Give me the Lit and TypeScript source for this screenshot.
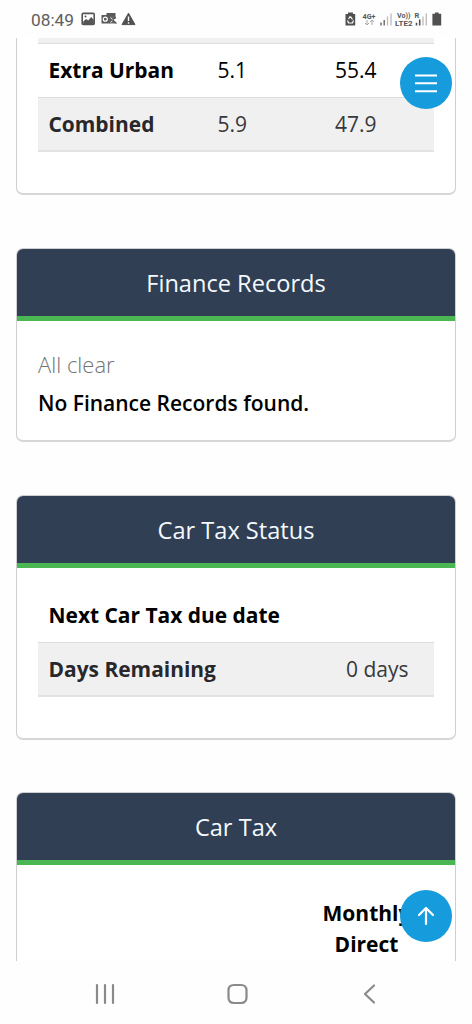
import { LitElement, html, css, svg, nothing } from "lit";
import { customElement, property } from "lit/decorators.js";

@customElement("report-card")
class ReportCard extends LitElement {
  @property() heading = "";
  static styles = css`
    :host { display: block; flex: none; box-sizing: border-box; border: 1px solid #cfcfd2; border-bottom: 2px solid #d6d6d8; border-radius: 7px; overflow: hidden; background: #fff; }
    .heading { box-sizing: border-box; height: 72px; display: flex; align-items: center; justify-content: center; background: #303f54; border-bottom: 5px solid #4ab752; color: #f4f9ff; font-size: 23.600px; line-height: 32px; padding-top: 1px; }
    .body { padding: 0 21px; }
  `;
  render() {
    return html`${this.heading ? html`<div class="heading">${this.heading}</div>` : nothing}
      <div class="body"><slot></slot></div>`;
  }
}

@customElement("status-bar")
class StatusBar extends LitElement {
  static styles = css`
    :host { display: flex; flex: none; height: 38px; box-sizing: border-box; padding: 0 30px 0 31px; align-items: center; justify-content: space-between; color: #555; background: #fefefe; }
    .left { display: flex; align-items: center; gap: 7px; }
    .time { font: 400 17.300px/38px Roboto, sans-serif; color: #606060; padding-top: 3px; height: 38px; box-sizing: border-box; line-height: 35px; }
    svg { display: block; }
    text { font-family: Roboto, sans-serif; font-weight: 700; fill: #585858; }
  `;
  render() {
    return html`
      <div class="left">
        <span class="time">08:49</span>
        <svg width="56" height="16" viewBox="0 0 56 16">
          <rect x="1.200" y="2.400" width="12" height="11" rx="1" fill="none" stroke="#555" stroke-width="1.600"/>
          <path d="M2.200 10.500l3-2.500 2 1.500 3-3.500 2.600 3v4H2.200z" fill="#555"/><circle cx="4.500" cy="5.400" r="1" fill="#555"/>
          <path d="M25.500 2h9v4h-9zM20.500 4h8.500v8.500h-8.500z" fill="#5a5a5a"/>
          <path d="M28.500 5.500h6v2l-2.500 1.500 2.500 2v1.500h-6z" fill="#666"/>
          <circle cx="24.300" cy="8.200" r="2" fill="none" stroke="#fff" stroke-width="1.200"/>
          <path d="M29.500 6.500l2.700 2.500-2.700 2.500" fill="none" stroke="#ddd" stroke-width="1"/>
          <path d="M31.500 8.500l3.500-2M31.500 9l4 3.500" stroke="#555" stroke-width="1.300"/>
          <path d="M47.500 2.200L54 13.600H41z" fill="#505050" stroke="#505050" stroke-width="1" stroke-linejoin="round"/>
          <path d="M47.500 5.500v4.500M47.500 11.300v1.500" stroke="#fff" stroke-width="1.400"/>
        </svg>
      </div>
      <svg width="98" height="20" viewBox="0 0 98 20">
        <path d="M4 3.500h5V5h2.200v11.500H1.500V5H4z" fill="#505050"/>
        <path d="M6.500 7.500l2 3M9.500 11.500l-1 2.500H4.500l-1-2.500M4.500 10l1.700-2.700" fill="none" stroke="#fff" stroke-width="1.200"/>
        <text x="18.500" y="9.500" font-size="7.500" textLength="13" lengthAdjust="spacingAndGlyphs">4G+</text>
        <path d="M23 11v5M21 14l2 2 2-2M28 16v-5M26 13l2-2 2 2" fill="none" stroke="#aaa" stroke-width="1"/>
        <path d="M37 13.500v3M40.200 11v5.500" stroke="#666" stroke-width="1.400"/>
        <path d="M43.500 7.500v9M47 4.500v12" stroke="#bbb" stroke-width="1.300"/>
        <text x="53" y="8.500" font-size="7" textLength="13.500" lengthAdjust="spacingAndGlyphs">Vo))</text>
        <text x="51" y="16.700" font-size="7" textLength="17.500" lengthAdjust="spacingAndGlyphs">LTE2</text>
        <text x="70.500" y="8.500" font-size="7.500">R</text>
        <path d="M72.500 13.800v2.700M75.700 10.500v6" stroke="#555" stroke-width="1.600"/>
        <path d="M79 7.500v9M82.300 4.500v12" stroke="#bbb" stroke-width="1.300"/>
        <path d="M91 3.500h3.600v1.300h2.600v11.700h-8.800V4.800H91z" fill="#505050"/>
      </svg>`;
  }
}

@customElement("app-root")
class AppRoot extends LitElement {
  static styles = css`
    :host { display: flex; flex-direction: column; position: relative; width: 472px; height: 1024px; background: #fefefe; overflow: hidden; font-family: "Open Sans", "Noto Sans", sans-serif; font-size: 21px; line-height: 31px; color: #000; }
    .scroll { flex: none; height: 923px; overflow: hidden; display: flex; flex-direction: column; padding: 0 16px; }
    .economy { height: 157px; border-top: 0; border-radius: 0 0 7px 7px; }
    .finance { margin-top: 53px; height: 194px; }
    .status { margin-top: 53px; height: 245px; }
    .tax { margin-top: 52px; height: 300px; }
    .tail { height: 6px; box-sizing: border-box; background: #f0f0f0; border-bottom: 1px solid #ddd; }
    .row { display: grid; box-sizing: border-box; height: 53px; align-items: center; padding: 0 10.500px; white-space: nowrap; }
    .fuel { grid-template-columns: 169px 117.500px auto; }
    .two { grid-template-columns: 297.500px auto; }
    .shade { height: 55px; background: #f0f0f0; border-top: 1px solid #ddd; border-bottom: 2px solid #e3e3e3; color: #28282c; }
    .shade span { color: #38383b; }
    .due { margin-top: 21px; }
    b { font-weight: 700; font-size: 20.950px; }
    .clear { margin-top: 28px; font-weight: 300; font-size: 22px; color: #747474; }
    .none { margin-top: 8px; font-weight: 600; }
    .direct { margin: 33px 1px 0 auto; width: 133px; text-align: center; font-weight: 700; }
    .fab { position: absolute; left: 400px; width: 52px; height: 52px; border-radius: 50%; background: #169cdc; display: flex; align-items: center; justify-content: center; }
    .menu { top: 57px; }
    .up { top: 890px; }
    .nav { flex: 1; display: flex; align-items: center; justify-content: space-between; padding: 3px 93px 0 94px; }
    .nav svg { display: block; }
  `;
  private glyph(d: string) {
    return html`<svg width="24" height="24" viewBox="0 0 24 24">${svg`<path d=${d} fill="none" stroke="#8a8a8a" stroke-width="2.2" stroke-linecap="round" stroke-linejoin="round"/>`}</svg>`;
  }
  render() {
    return html`
      <status-bar></status-bar>
      <div class="scroll">
        <report-card class="economy">
          <div class="tail"></div>
          <div class="row fuel"><b>Extra Urban</b><span>5.1</span><span>55.4</span></div>
          <div class="row fuel shade"><b>Combined</b><span>5.9</span><span>47.9</span></div>
        </report-card>
        <report-card class="finance" heading="Finance Records">
          <div class="clear">All clear</div>
          <div class="none">No Finance Records found.</div>
        </report-card>
        <report-card class="status" heading="Car Tax Status">
          <div class="row two due"><b>Next Car Tax due date</b></div>
          <div class="row two shade"><b>Days Remaining</b><span>0 days</span></div>
        </report-card>
        <report-card class="tax" heading="Car Tax">
          <div class="direct">Monthly<br>Direct</div>
        </report-card>
      </div>
      <div class="nav">
        ${this.glyph("M3 3v18M11 3v18M19 3v18")}
        ${this.glyph("M9 3h7q5.500 0 5.500 5.500v7q0 5.500-5.500 5.500H9q-5.500 0-5.500-5.500v-7Q3.500 3 9 3z")}
        ${this.glyph("M19 3.500L10 12l9 8.500")}
      </div>
      <div class="fab menu"><svg width="24" height="24" viewBox="0 0 24 24"><path d="M1 4.500h22M1 12.300h22M1 20.200h22" stroke="#fff" stroke-width="2"/></svg></div>
      <div class="fab up"><svg width="24" height="24" viewBox="0 0 24 24"><path d="M12 20V4M5 11l7-7 7 7" fill="none" stroke="#fff" stroke-width="2.200" stroke-linecap="round" stroke-linejoin="round"/></svg></div>`;
  }
}
